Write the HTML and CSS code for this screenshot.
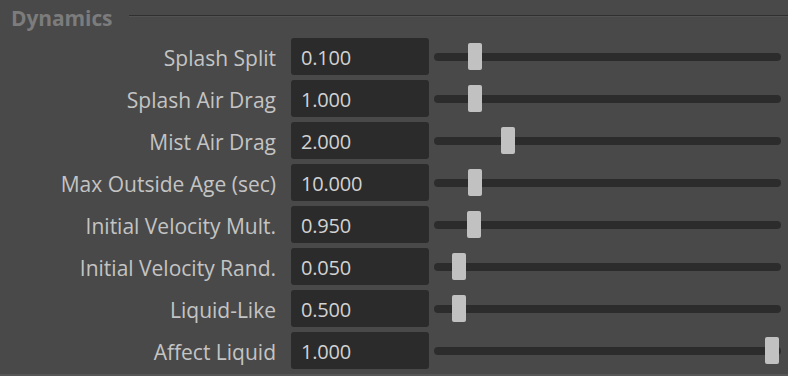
FILE: index.html
```html
<html>
<head>
	<meta charset="utf-8">
	<link rel="stylesheet" href="styles.css">
</head>
<body>
	<div class="panel">
		<div class="group-head">
			<span class="group-title">Dynamics</span>
			<span class="group-rule"></span>
		</div>
		<div class="rows">
			<div class="row">
				<label class="name">Splash Split</label>
				<div class="field">0.100</div>
				<div class="track"><span class="thumb" style="left: 34px"></span></div>
			</div>
			<div class="row">
				<label class="name">Splash Air Drag</label>
				<div class="field">1.000</div>
				<div class="track"><span class="thumb" style="left: 34px"></span></div>
			</div>
			<div class="row">
				<label class="name">Mist Air Drag</label>
				<div class="field">2.000</div>
				<div class="track"><span class="thumb" style="left: 67px"></span></div>
			</div>
			<div class="row">
				<label class="name">Max Outside Age (sec)</label>
				<div class="field">10.000</div>
				<div class="track"><span class="thumb" style="left: 34px"></span></div>
			</div>
			<div class="row">
				<label class="name">Initial Velocity Mult.</label>
				<div class="field">0.950</div>
				<div class="track"><span class="thumb" style="left: 33px"></span></div>
			</div>
			<div class="row">
				<label class="name">Initial Velocity Rand.</label>
				<div class="field">0.050</div>
				<div class="track"><span class="thumb" style="left: 18px"></span></div>
			</div>
			<div class="row">
				<label class="name">Liquid-Like</label>
				<div class="field">0.500</div>
				<div class="track"><span class="thumb" style="left: 18px"></span></div>
			</div>
			<div class="row">
				<label class="name">Affect Liquid</label>
				<div class="field">1.000</div>
				<div class="track"><span class="thumb" style="left: 331px"></span></div>
			</div>
		</div>
	</div>
</body>
</html>
```

FILE: styles.css
```css
body {
	margin: 0;
	background: #494949;
	font-family: "Open Sans", "Noto Sans", sans-serif;
}

.panel {
	height: 374px;
	border-bottom: 2px solid #565656;
}

/* section header */
.group-head {
	display: flex;
	height: 38px;
	padding-left: 11px;
}
.group-title {
	color: #7c7c7c;
	font-weight: bold;
	font-size: 21px;
	line-height: 22px;
	margin-top: 7px;
	letter-spacing: -0.1px;
}
.group-rule {
	flex: 1;
	height: 1px;
	margin: 15px 0 0 17px;
	background: #303030;
	border-bottom: 1px solid #525252;
}

/* parameter rows */
.rows {
	display: flex;
	flex-direction: column;
	gap: 5px;
}
.row {
	display: grid;
	grid-template-columns: 276px 138px 347px;
	column-gap: 15px;
	align-items: center;
	height: 37px;
}
.name {
	text-align: right;
	color: #c4c4c4;
	font-size: 21px;
	white-space: nowrap;
	padding-top: 3px;
}
.field {
	height: 37px;
	line-height: 39px;
	box-sizing: border-box;
	padding-left: 10px;
	background: #2b2b2b;
	border-radius: 3px;
	color: #d2d2d2;
	font-size: 20px;
	letter-spacing: -0.2px;
}
.track {
	position: relative;
	width: 347px;
	height: 8px;
	margin: 1px 0 0 -10px;
	background: #2c2c2c;
	border-radius: 4px;
}
.thumb {
	position: absolute;
	top: -10px;
	width: 14px;
	height: 27px;
	background: #c1c1c1;
	border-radius: 2px;
}
```
